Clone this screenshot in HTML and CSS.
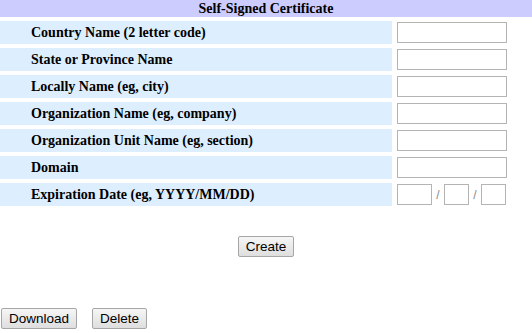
FILE: index.html
```html
<html lang="en">
<head>
    <meta charset="UTF-8">
    <title>Self-Signed Certificate</title>
    <link rel="stylesheet" href="styles.css">
</head>
<body>

<div class="cert">
    <div class="cert-head">Self-Signed Certificate</div>
    <div class="cert-rows">
        <div class="label">Country Name (2 letter code)</div>
        <div class="field"><input type="text" class="txt"></div>
        <div class="label">State or Province Name</div>
        <div class="field"><input type="text" class="txt"></div>
        <div class="label">Locally Name (eg, city)</div>
        <div class="field"><input type="text" class="txt"></div>
        <div class="label">Organization Name (eg, company)</div>
        <div class="field"><input type="text" class="txt"></div>
        <div class="label">Organization Unit Name (eg, section)</div>
        <div class="field"><input type="text" class="txt"></div>
        <div class="label">Domain</div>
        <div class="field"><input type="text" class="txt"></div>
        <div class="label">Expiration Date (eg, YYYY/MM/DD)</div>
        <div class="field date">
            <input type="text" class="yy">
            <span class="sep">/</span>
            <input type="text" class="mm">
            <span class="sep">/</span>
            <input type="text" class="mm">
        </div>
    </div>
    <div class="create-row">
        <button type="button">Create</button>
    </div>
</div>

<div class="actions">
    <button type="button">Download</button>
    <button type="button">Delete</button>
</div>

</body>
</html>
```

FILE: styles.css
```css
body {
    margin: 0;
    padding: 0;
    background: #fff;
    font-family: "Liberation Serif", "Times New Roman", serif;
    color: #000;
}
.cert {
    width: 532px;
}
.cert-head {
    height: 17px;
    line-height: 17px;
    background: #ccccff;
    text-align: center;
    font-weight: bold;
    font-size: 14px;
    margin-bottom: 4px;
}
.cert-rows {
    display: grid;
    grid-template-columns: 392px 1fr;
    grid-auto-rows: 23px;
    row-gap: 4px;
}
.label {
    background: #ddeeff;
    font-weight: bold;
    font-size: 14px;
    line-height: 23px;
    padding-left: 31px;
}
.field {
    display: flex;
    align-items: center;
    padding-left: 5px;
}
input {
    box-sizing: border-box;
    height: 21px;
    border: 1px solid #b4b4b4;
    margin: 0;
    padding: 0 2px;
    background: #fff;
}
.txt {
    width: 110px;
}
.yy {
    width: 35px;
}
.mm {
    width: 25px;
}
.sep {
    font-family: "Liberation Sans", Arial, sans-serif;
    font-size: 12px;
    color: #888;
    width: 12px;
    text-align: center;
}
.create-row {
    text-align: center;
    margin-top: 30px;
}
button {
    font-family: "Liberation Sans", Arial, sans-serif;
    font-size: 13.5px;
    height: 21px;
    padding: 0 7px;
    color: #000;
    background: linear-gradient(#f6f6f6, #dedede);
    border: 1px solid #a6a6a6;
    border-radius: 2px;
}
.actions {
    margin-top: 51px;
    padding-left: 1px;
    display: flex;
    gap: 15px;
}
```
